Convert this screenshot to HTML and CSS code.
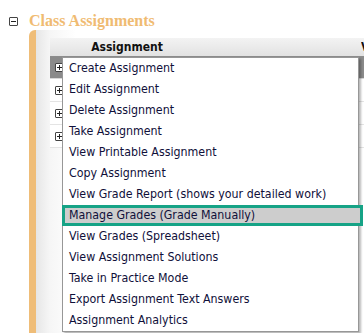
FILE: index.html
```html
<!DOCTYPE html>
<html>
<head>
<meta charset="utf-8">
<link rel="stylesheet" href="styles.css">
</head>
<body>
<div class="page">
  <div class="title-row">
    <span class="toggle minus"></span>
    <h2 class="title">Class Assignments</h2>
  </div>
  <div class="section">
    <div class="accent"></div>
    <div class="panel">
      <div class="grid">
        <div class="thead">
          <div class="th th-main">Assignment</div>
          <div class="th th-gap"></div>
          <div class="th th-next">V</div>
        </div>
        <div class="row row-active"><span class="toggle plus"></span></div>
        <div class="row"><span class="toggle plus"></span></div>
        <div class="row"><span class="toggle plus"></span></div>
        <div class="row"><span class="toggle plus"></span></div>
      </div>
    </div>
  </div>
  <ul class="menu">
    <li class="item">Create Assignment</li>
    <li class="item">Edit Assignment</li>
    <li class="item">Delete Assignment</li>
    <li class="item">Take Assignment</li>
    <li class="item">View Printable Assignment</li>
    <li class="item">Copy Assignment</li>
    <li class="item">View Grade Report (shows your detailed work)</li>
    <li class="item item-hover">Manage Grades (Grade Manually)</li>
    <li class="item">View Grades (Spreadsheet)</li>
    <li class="item">View Assignment Solutions</li>
    <li class="item">Take in Practice Mode</li>
    <li class="item">Export Assignment Text Answers</li>
    <li class="item">Assignment Analytics</li>
  </ul>
</div>
</body>
</html>
```

FILE: styles.css
```css
html, body {
  margin: 0;
  padding: 0;
  background: #fff;
}
.page {
  position: relative;
  width: 364px;
  height: 333px;
  overflow: hidden;
  font-family: "DejaVu Sans Condensed", "DejaVu Sans", sans-serif;
}
.title-row {
  display: flex;
  align-items: center;
  gap: 11px;
  padding: 12px 0 0 9px;
  height: 18px;
}
.toggle {
  position: relative;
  display: inline-block;
  box-sizing: border-box;
  width: 9px;
  height: 9px;
  border: 1px solid #444;
  border-radius: 1px;
  background: #fff;
  flex: none;
}
.toggle::before {
  content: "";
  position: absolute;
  left: 1px;
  right: 1px;
  top: 3px;
  height: 1px;
  background: #222;
}
.plus::after {
  content: "";
  position: absolute;
  top: 1px;
  bottom: 1px;
  left: 3px;
  width: 1px;
  background: #222;
}
.title {
  margin: 0;
  font-family: "Liberation Serif", serif;
  font-weight: bold;
  font-size: 16px;
  line-height: 18px;
  color: #f0bb72;
}
.section {
  display: flex;
  margin: 0 0 0 29px;
  height: 303px;
}
.accent {
  width: 7px;
  flex: none;
  background: #efbd78;
  border-top-left-radius: 6px;
}
.panel {
  flex: 1;
  padding: 8px 0 0 14px;
  background: linear-gradient(to right, #e6e6e6, #f6f6f6 14px, #fff 40px);
}
.grid {
  background: #fff;
}
.thead {
  display: flex;
  height: 18px;
  border-bottom: 1px solid #8c8c8c;
  background: linear-gradient(#f3f3f3, #e2e2e2);
  font-weight: bold;
  font-size: 12px;
  line-height: 18px;
  color: #111;
}
.th-main {
  width: 154px;
  flex: none;
  text-align: center;
}
.th-gap {
  width: 157px;
  flex: none;
}
.th-next {
  flex: none;
  width: 3px;
  overflow: hidden;
  white-space: nowrap;
}
.row {
  height: 22px;
  border-bottom: 1px solid #e4e4e4;
  padding-left: 5px;
  display: flex;
  align-items: center;
}
.row-active {
  background: #8a8a8a;
  height: 21px;
  border-bottom: 1px solid #d8d8d8;
}
.menu {
  position: absolute;
  left: 62px;
  top: 57px;
  width: 297px;
  margin: 0;
  padding: 0;
  list-style: none;
  box-sizing: border-box;
  background: #fff;
  border: 1px solid #979797;
  box-shadow: 2px 2px 2px rgba(0, 0, 0, 0.28);
}
.item {
  height: 21px;
  line-height: 21px;
  padding-left: 6px;
  font-size: 12.3px;
  color: #10103a;
  white-space: nowrap;
}
.item-hover {
  box-sizing: border-box;
  margin: 0 -5px 0 -1px;
  padding-left: 4px;
  line-height: 15px;
  border: 3px solid #16a386;
  background: #cdcdcd;
}
```
